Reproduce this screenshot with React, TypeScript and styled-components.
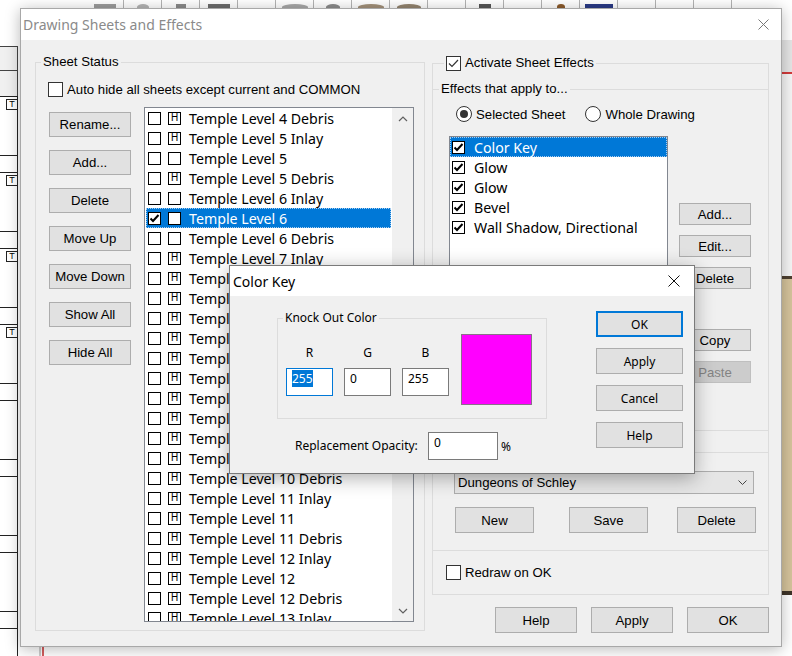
import React from "react";
import styled, { createGlobalStyle, css } from "styled-components";

const UI = `"Liberation Sans", Arial, sans-serif`;
const SEGOE = `"Noto Sans", "Open Sans", sans-serif`;

const GlobalStyle = createGlobalStyle`
  * { box-sizing: border-box; }
  html, body { margin: 0; padding: 0; background: #ffffff; }
  body { font-family: ${UI}; font-size: 13.2px; color: #000; }
`;

/* ---------- background application ---------- */
const Screen = styled.div`
  position: relative;
  width: 792px;
  height: 656px;
  overflow: hidden;
  background: #ffffff;
  display: flex;
  flex-direction: column;
`;

const Toolbar = styled.div`
  height: 8px;
  flex: none;
  display: flex;
  padding-left: 86px;
  overflow: hidden;
`;

const ToolCell = styled.div`
  width: 38px;
  height: 8px;
  flex: none;
  border-right: 1px solid #b4b4b4;
  display: flex;
  justify-content: center;
  align-items: flex-end;
  overflow: hidden;
`;

const ToolBlob = styled.span<{ $c: string; $w: number; $round?: boolean }>`
  width: ${(p) => p.$w}px;
  height: 6px;
  margin-bottom: -2px;
  background: ${(p) => p.$c};
  border-radius: ${(p) => (p.$round ? "50% 50% 0 0" : "0")};
`;

const Workspace = styled.div`
  flex: 1;
  display: flex;
  min-height: 0;
`;

const SheetStrip = styled.div`
  width: 18px;
  flex: none;
  display: flex;
  flex-direction: column;
  padding-top: 38px;
`;

const StripCell = styled.div<{ $h: number }>`
  height: ${(p) => p.$h}px;
  flex: none;
  background: #f0f0f0;
  border-top: 1px solid #444;
  border-right: 1px solid #444;
`;

const Thumb = styled.div`
  height: 76px;
  flex: none;
  display: flex;
  flex-direction: column;
  border-top: 1px solid #222;
  border-right: 1px solid #222;
  background: #fff;
`;

const ThumbArea = styled.div`
  height: 59px;
  flex: none;
  display: flex;
  justify-content: flex-end;
  align-items: flex-start;
  border-bottom: 1px solid #222;
`;

const TBadge = styled.span`
  width: 11px;
  height: 11px;
  margin-top: 2px;
  border: 1px solid #222;
  border-right: none;
  font: 9px ${UI};
  line-height: 9px;
  text-align: center;
`;

const Canvas = styled.div`
  flex: 1;
  min-width: 0;
  display: flex;
`;

const CanvasDrawing = styled.svg`
  display: block;
  width: 100%;
  height: 100%;
`;

const SidePanel = styled.div`
  width: 10px;
  flex: none;
  display: flex;
  flex-direction: column;
  padding-top: 32px;
`;

const SideBand = styled.div<{ $h: number; $c: string }>`
  height: ${(p) => p.$h}px;
  flex: none;
  background: ${(p) => p.$c};
`;

/* ---------- windows ---------- */
const MainWindow = styled.div`
  position: absolute;
  left: 20px;
  top: 8px;
  width: 762px;
  height: 639px;
  border: 1px solid #a8a8a8;
  background: #f0f0f0;
  box-shadow: 0 2px 14px rgba(0, 0, 0, 0.28);
  display: flex;
  flex-direction: column;
`;

const DialogWindow = styled.div`
  position: absolute;
  left: 229px;
  top: 265px;
  width: 466px;
  height: 209px;
  border: 1px solid #7a7a7a;
  background: #f0f0f0;
  box-shadow: 0 4px 18px rgba(0, 0, 0, 0.32);
  display: flex;
  flex-direction: column;
`;

const TitleBar = styled.div<{ $h: number; $pl: number; $pr: number }>`
  height: ${(p) => p.$h}px;
  flex: none;
  background: #ffffff;
  display: flex;
  align-items: center;
  justify-content: space-between;
  padding: 0 ${(p) => p.$pr}px 0 ${(p) => p.$pl}px;
`;

const TitleText = styled.span<{ $inactive?: boolean }>`
  font-family: ${SEGOE};
  font-size: 14px;
  color: ${(p) => (p.$inactive ? "#8a8a8a" : "#000")};
  white-space: nowrap;
`;

const CloseIcon = ({ size, color }: { size: number; color: string }) => (
  <svg width={size} height={size} viewBox={`0 0 ${size} ${size}`}>
    <path d={`M0.5 0.5 L${size - 0.5} ${size - 0.5} M${size - 0.5} 0.5 L0.5 ${size - 0.5}`} stroke={color} strokeWidth="1" fill="none" />
  </svg>
);

/* ---------- main dialog body ---------- */
const MainBody = styled.div`
  flex: 1;
  display: grid;
  grid-template-columns: 390px 337px;
  column-gap: 7px;
  padding: 0 12px 0 14px;
  align-items: start;
`;

const GroupBox = styled.div<{ $mt: number; $h: number; $w?: number }>`
  margin-top: ${(p) => p.$mt}px;
  height: ${(p) => p.$h}px;
  ${(p) => (p.$w ? `width: ${p.$w}px;` : "")}
  flex: none;
  border: 1px solid #dcdcdc;
  display: flex;
  flex-direction: column;
`;

const GroupLabel = styled.div<{ $ml: number; $segoe?: boolean }>`
  align-self: flex-start;
  margin: -9px 0 0 ${(p) => p.$ml}px;
  padding: 0 2px;
  height: 16px;
  line-height: 16px;
  background: #f0f0f0;
  display: flex;
  align-items: center;
  gap: 4px;
  white-space: nowrap;
  font-family: ${(p) => (p.$segoe ? SEGOE : UI)};
  font-size: ${(p) => (p.$segoe ? "12px" : "13.2px")};
`;

const Section = styled.div<{ $mt: number; $h: number }>`
  margin-top: ${(p) => p.$mt}px;
  height: ${(p) => p.$h}px;
  flex: none;
  border-top: 1px solid #dcdcdc;
  border-bottom: 1px solid #dcdcdc;
  display: flex;
  flex-direction: column;
`;

const CheckRow = styled.div<{ $mt: number; $ml: number }>`
  margin: ${(p) => p.$mt}px 0 0 ${(p) => p.$ml}px;
  height: 15px;
  display: flex;
  align-items: center;
  gap: 4px;
  white-space: nowrap;
`;

const WinCheck = styled.span`
  width: 15px;
  height: 15px;
  flex: none;
  border: 1px solid #333;
  background: #fff;
  display: inline-flex;
  align-items: center;
  justify-content: center;
`;

const CheckBox = ({ checked }: { checked?: boolean }) => (
  <WinCheck>
    {checked && (
      <svg width="13" height="13" viewBox="0 0 13 13">
        <path d="M2 6.5 L5 9.5 L11 3" stroke="#333" strokeWidth="1.2" fill="none" />
      </svg>
    )}
  </WinCheck>
);

const RadioRow = styled.div`
  margin: 9px 0 0 23px;
  height: 16px;
  display: flex;
  align-items: center;
  gap: 20px;
`;

const RadioItem = styled.label`
  display: flex;
  align-items: center;
  gap: 4px;
  white-space: nowrap;
`;

const RadioCircle = styled.span<{ $on?: boolean }>`
  width: 16px;
  height: 16px;
  flex: none;
  border: 1px solid #333;
  border-radius: 50%;
  background: #fff;
  display: inline-flex;
  align-items: center;
  justify-content: center;
  &::after {
    content: "";
    width: 8px;
    height: 8px;
    border-radius: 50%;
    background: ${(p) => (p.$on ? "#333" : "transparent")};
  }
`;

const ContentRow = styled.div<{ $mt: number; $pl: number }>`
  margin-top: ${(p) => p.$mt}px;
  padding-left: ${(p) => p.$pl}px;
  display: flex;
  align-items: flex-start;
`;

const ButtonCol = styled.div<{ $pt: number; $gap: number; $ml?: number; $w: number }>`
  width: ${(p) => p.$w}px;
  flex: none;
  margin-left: ${(p) => p.$ml ?? 0}px;
  padding-top: ${(p) => p.$pt}px;
  display: flex;
  flex-direction: column;
  gap: ${(p) => p.$gap}px;
`;

const Btn = styled.button<{ $w: number; $h: number; $mt?: number; $ml?: number; $default?: boolean; $segoe?: boolean }>`
  width: ${(p) => p.$w}px;
  height: ${(p) => p.$h}px;
  margin: ${(p) => p.$mt ?? 0}px 0 0 ${(p) => p.$ml ?? 0}px;
  flex: none;
  padding: 0;
  background: #e1e1e1;
  border: 1px solid #adadad;
  border-radius: 0;
  color: #000;
  font-family: ${(p) => (p.$segoe ? SEGOE : UI)};
  font-size: ${(p) => (p.$segoe ? "12px" : "13.2px")};
  font-weight: 400;
  display: flex;
  align-items: center;
  justify-content: center;
  white-space: nowrap;
  ${(p) =>
    p.$default &&
    css`
      border: 2px solid #0078d7;
    `}
  &:disabled {
    background: #cccccc;
    border-color: #bfbfbf;
    color: #838383;
  }
`;

const ListBox = styled.div<{ $w: number; $h: number; $ml?: number }>`
  width: ${(p) => p.$w}px;
  height: ${(p) => p.$h}px;
  margin-left: ${(p) => p.$ml ?? 0}px;
  flex: none;
  border: 1px solid #828790;
  background: #fff;
  display: flex;
  overflow: hidden;
`;

const ListRows = styled.div<{ $px: number }>`
  flex: 1;
  min-width: 0;
  padding: 0 ${(p) => p.$px}px;
  display: flex;
  flex-direction: column;
  overflow: hidden;
`;

const ListRow = styled.div<{ $selected?: boolean }>`
  height: 20px;
  flex: none;
  display: flex;
  align-items: center;
  padding-left: 2px;
  font-family: ${SEGOE};
  font-size: 14.2px;
  white-space: nowrap;
  color: ${(p) => (p.$selected ? "#fff" : "#000")};
  background: ${(p) => (p.$selected ? "#0078d7" : "transparent")};
  outline: ${(p) => (p.$selected ? "1px dotted #a7cdf0" : "none")};
  outline-offset: -1px;
`;

const MiniBox = styled.span<{ $ml?: number }>`
  width: 13px;
  height: 13px;
  flex: none;
  margin-left: ${(p) => p.$ml ?? 0}px;
  border: 1px solid #000;
  background: #fff;
  color: #000;
  display: inline-flex;
  align-items: center;
  justify-content: center;
  font: 10px ${UI};
  line-height: 10px;
`;

const RowText = styled.span<{ $ml: number }>`
  margin-left: ${(p) => p.$ml}px;
`;

const MiniCheck = () => (
  <svg width="11" height="11" viewBox="0 0 11 11">
    <path d="M1.5 5.5 L4 8 L9.5 2" stroke="#000" strokeWidth="2" fill="none" />
  </svg>
);

const ScrollBar = styled.div`
  width: 21px;
  flex: none;
  background: #f0f0f0;
  display: flex;
  flex-direction: column;
`;

const ScrollBtn = styled.div`
  height: 21px;
  flex: none;
  display: flex;
  align-items: center;
  justify-content: center;
`;

const ScrollTrack = styled.div`
  flex: 1;
  padding: 0 2px;
  display: flex;
  flex-direction: column;
`;

const ScrollThumb = styled.div<{ $mt: number; $h: number }>`
  margin-top: ${(p) => p.$mt}px;
  height: ${(p) => p.$h}px;
  background: #cdcdcd;
`;

const Chevron = ({ up }: { up?: boolean }) => (
  <svg width="10" height="6" viewBox="0 0 10 6">
    <path d={up ? "M1 5 L5 1 L9 5" : "M1 1 L5 5 L9 1"} stroke="#606060" strokeWidth="1.2" fill="none" />
  </svg>
);

const Combo = styled.div`
  margin: 18px 14px 0 21px;
  height: 23px;
  flex: none;
  border: 1px solid #adadad;
  background: #e5e5e5;
  display: flex;
  align-items: center;
  justify-content: space-between;
  padding: 0 6px 0 3px;
  white-space: nowrap;
`;

const FlexRow = styled.div<{ $mt: number; $pl: number; $gap?: number }>`
  margin-top: ${(p) => p.$mt}px;
  padding-left: ${(p) => p.$pl}px;
  display: flex;
  align-items: center;
  gap: ${(p) => p.$gap ?? 0}px;
`;

const BottomBar = styled.div`
  margin-top: 12px;
  display: flex;
  justify-content: flex-end;
  gap: 14px;
`;

const RightColumn = styled.div`
  display: flex;
  flex-direction: column;
`;

/* ---------- Color Key dialog ---------- */
const DialogBody = styled.div`
  flex: 1;
  display: flex;
  align-items: flex-start;
`;

const DialogLeft = styled.div`
  padding: 22px 0 0 47px;
  display: flex;
  flex-direction: column;
`;

const ChannelRow = styled.div`
  padding-left: 8px;
  display: flex;
  align-items: flex-start;
  gap: 11px;
`;

const ChannelCol = styled.div`
  width: 47px;
  padding-top: 19px;
  display: flex;
  flex-direction: column;
  align-items: center;
  gap: 7px;
`;

const SegoeLabel = styled.span<{ $w?: number }>`
  font-family: ${SEGOE};
  font-size: 12px;
  line-height: 16px;
  white-space: nowrap;
  ${(p) => (p.$w ? `width: ${p.$w}px; flex: none;` : "")}
`;

const TextField = styled.div<{ $w: number; $focused?: boolean }>`
  width: ${(p) => p.$w}px;
  height: 28px;
  flex: none;
  border: 1px solid ${(p) => (p.$focused ? "#0078d7" : "#7a7a7a")};
  background: #fff;
  padding: 2px 5px 0;
  font-family: ${SEGOE};
  font-size: 12px;
  line-height: 16px;
`;

const Selection = styled.span`
  background: #0078d7;
  color: #fff;
`;

const Swatch = styled.div<{ $color: string }>`
  width: 71px;
  height: 71px;
  flex: none;
  margin: 8px 0 0 1px;
  border: 1px solid #8a6f8a;
  background: ${(p) => p.$color};
`;

const OpacityRow = styled.div`
  margin-top: 13px;
  padding-left: 18px;
  height: 28px;
  display: flex;
  align-items: center;
`;

const Percent = styled.span`
  margin-left: 3px;
  font-family: ${SEGOE};
  font-size: 12px;
`;

/* ---------- data ---------- */
const sheets: [string, boolean, boolean][] = [
  ["Temple Level 4 Debris", false, true],
  ["Temple Level 5 Inlay", false, true],
  ["Temple Level 5", false, false],
  ["Temple Level 5 Debris", false, true],
  ["Temple Level 6 Inlay", false, false],
  ["Temple Level 6", true, false],
  ["Temple Level 6 Debris", false, false],
  ["Temple Level 7 Inlay", false, true],
  ["Temple Level 7", false, true],
  ["Temple Level 7 Debris", false, true],
  ["Temple Level 8 Inlay", false, true],
  ["Temple Level 8", false, true],
  ["Temple Level 8 Debris", false, true],
  ["Temple Level 9 Inlay", false, true],
  ["Temple Level 9", false, true],
  ["Temple Level 9 Debris", false, true],
  ["Temple Level 10 Inlay", false, true],
  ["Temple Level 10", false, true],
  ["Temple Level 10 Debris", false, true],
  ["Temple Level 11 Inlay", false, true],
  ["Temple Level 11", false, true],
  ["Temple Level 11 Debris", false, true],
  ["Temple Level 12 Inlay", false, true],
  ["Temple Level 12", false, true],
  ["Temple Level 12 Debris", false, true],
  ["Temple Level 13 Inlay", false, true],
];

const effects = ["Color Key", "Glow", "Glow", "Bevel", "Wall Shadow, Directional"];

const sheetButtons = ["Rename...", "Add...", "Delete", "Move Up", "Move Down", "Show All", "Hide All"];

const toolIcons: { c: string; w: number; round?: boolean }[] = [
  { c: "#9c9c9c", w: 22 },
  { c: "#b5b5b5", w: 12, round: true },
  { c: "#8a8a8a", w: 10 },
  { c: "#6d6d6d", w: 22 },
  { c: "#fff", w: 1 },
  { c: "#a9a9a9", w: 26, round: true },
  { c: "#8c8c8c", w: 14, round: true },
  { c: "#a3917a", w: 26, round: true },
  { c: "#93846f", w: 24, round: true },
  { c: "#fff", w: 1 },
  { c: "#555", w: 12 },
  { c: "#fff", w: 1 },
  { c: "#8b5a2b", w: 8, round: true },
  { c: "#2a3a85", w: 28 },
  { c: "#fff", w: 1 },
  { c: "#fff", w: 1 },
  { c: "#fff", w: 1 },
];

export default function App() {
  return (
    <>
      <GlobalStyle />
      <Screen>
        <Toolbar>
          {toolIcons.map((t, i) => (
            <ToolCell key={i}>
              <ToolBlob $c={t.c} $w={t.w} $round={t.round} />
            </ToolCell>
          ))}
        </Toolbar>
        <Workspace>
          <SheetStrip>
            <StripCell $h={24} />
            <StripCell $h={26} />
            {[0, 1, 2, 3, 4, 5, 6, 7].map((i) => (
              <Thumb key={i}>
                <ThumbArea>{i < 4 && <TBadge>T</TBadge>}</ThumbArea>
              </Thumb>
            ))}
          </SheetStrip>
          <Canvas>
            <CanvasDrawing viewBox="0 0 764 648" preserveAspectRatio="none">
              <line x1="25" y1="0" x2="25" y2="648" stroke="#c62828" strokeWidth="1.5" />
              <line x1="22" y1="0" x2="22" y2="648" stroke="#9a9a9a" strokeWidth="1" />
            </CanvasDrawing>
          </Canvas>
          <SidePanel>
            <SideBand $h={32} $c="#e6e6e6" />
            <SideBand $h={2} $c="#d23a3a" />
            <SideBand $h={202} $c="#f6f6f6" />
            <SideBand $h={3} $c="#4e4030" />
            <SideBand $h={312} $c="#d6c49c" />
            <SideBand $h={4} $c="#3e3428" />
          </SidePanel>
        </Workspace>

        <MainWindow>
          <TitleBar $h={31} $pl={2} $pr={12}>
            <TitleText $inactive>Drawing Sheets and Effects</TitleText>
            <CloseIcon size={11} color="#777" />
          </TitleBar>
          <MainBody>
            <GroupBox $mt={22} $h={569}>
              <GroupLabel $ml={5}>Sheet Status</GroupLabel>
              <CheckRow $mt={12} $ml={12}>
                <CheckBox />
                <span>Auto hide all sheets except current and COMMON</span>
              </CheckRow>
              <ContentRow $mt={10} $pl={13}>
                <ButtonCol $w={82} $pt={5} $gap={13}>
                  {sheetButtons.map((b) => (
                    <Btn key={b} $w={82} $h={25}>
                      {b}
                    </Btn>
                  ))}
                </ButtonCol>
                <ListBox $w={270} $h={515} $ml={13}>
                  <ListRows $px={1}>
                    {sheets.map(([name, checked, hidden]) => (
                      <ListRow key={name} $selected={name === "Temple Level 6"}>
                        <MiniBox>{checked && <MiniCheck />}</MiniBox>
                        <MiniBox $ml={7}>{hidden ? "H" : ""}</MiniBox>
                        <RowText $ml={8}>{name}</RowText>
                      </ListRow>
                    ))}
                  </ListRows>
                  <ScrollBar>
                    <ScrollBtn>
                      <Chevron up />
                    </ScrollBtn>
                    <ScrollTrack>
                      <ScrollThumb $mt={160} $h={120} />
                    </ScrollTrack>
                    <ScrollBtn>
                      <Chevron />
                    </ScrollBtn>
                  </ScrollBar>
                </ListBox>
              </ContentRow>
            </GroupBox>

            <RightColumn>
              <GroupBox $mt={23} $h={532}>
                <GroupLabel $ml={11}>
                  <CheckBox checked />
                  <span>Activate Sheet Effects</span>
                </GroupLabel>
                <Section $mt={18} $h={342}>
                  <GroupLabel $ml={6}>Effects that apply to...</GroupLabel>
                  <RadioRow>
                    <RadioItem>
                      <RadioCircle $on />
                      <span>Selected Sheet</span>
                    </RadioItem>
                    <RadioItem>
                      <RadioCircle />
                      <span>Whole Drawing</span>
                    </RadioItem>
                  </RadioRow>
                  <ContentRow $mt={14} $pl={16}>
                    <ListBox $w={219} $h={270}>
                      <ListRows $px={0}>
                        {effects.map((e, i) => (
                          <ListRow key={i} $selected={i === 0}>
                            <MiniBox>
                              <MiniCheck />
                            </MiniBox>
                            <RowText $ml={9}>{e}</RowText>
                          </ListRow>
                        ))}
                      </ListRows>
                    </ListBox>
                    <ButtonCol $w={72} $pt={67} $gap={10} $ml={11}>
                      <Btn $w={72} $h={22}>Add...</Btn>
                      <Btn $w={72} $h={22}>Edit...</Btn>
                      <Btn $w={72} $h={22}>Delete</Btn>
                      <Btn $w={72} $h={22} $mt={30}>Copy</Btn>
                      <Btn $w={72} $h={22} disabled>Paste</Btn>
                    </ButtonCol>
                  </ContentRow>
                </Section>
                <Section $mt={21} $h={99}>
                  <Combo>
                    <span>Dungeons of Schley</span>
                    <svg width="9" height="5" viewBox="0 0 9 5">
                      <path d="M0.5 0.5 L4.5 4.5 L8.5 0.5" stroke="#444" strokeWidth="1" fill="none" />
                    </svg>
                  </Combo>
                  <FlexRow $mt={13} $pl={22}>
                    <Btn $w={79} $h={26}>New</Btn>
                    <Btn $w={79} $h={26} $ml={35}>Save</Btn>
                    <Btn $w={79} $h={26} $ml={29}>Delete</Btn>
                  </FlexRow>
                </Section>
                <CheckRow $mt={14} $ml={13}>
                  <CheckBox />
                  <span>Redraw on OK</span>
                </CheckRow>
              </GroupBox>
              <BottomBar>
                <Btn $w={82} $h={26}>Help</Btn>
                <Btn $w={82} $h={26}>Apply</Btn>
                <Btn $w={82} $h={26}>OK</Btn>
              </BottomBar>
            </RightColumn>
          </MainBody>
        </MainWindow>

        <DialogWindow>
          <TitleBar $h={30} $pl={3} $pr={14}>
            <TitleText>Color Key</TitleText>
            <CloseIcon size={12} color="#111" />
          </TitleBar>
          <DialogBody>
            <DialogLeft>
              <GroupBox $mt={0} $h={101} $w={270}>
                <GroupLabel $ml={5} $segoe>
                  Knock Out Color
                </GroupLabel>
                <ChannelRow>
                  <ChannelCol>
                    <SegoeLabel>R</SegoeLabel>
                    <TextField $w={47} $focused>
                      <Selection>255</Selection>
                    </TextField>
                  </ChannelCol>
                  <ChannelCol>
                    <SegoeLabel>G</SegoeLabel>
                    <TextField $w={47}>0</TextField>
                  </ChannelCol>
                  <ChannelCol>
                    <SegoeLabel>B</SegoeLabel>
                    <TextField $w={47}>255</TextField>
                  </ChannelCol>
                  <Swatch $color="#ff00ff" />
                </ChannelRow>
              </GroupBox>
              <OpacityRow>
                <SegoeLabel $w={133}>Replacement Opacity:</SegoeLabel>
                <TextField $w={70}>0</TextField>
                <Percent>%</Percent>
              </OpacityRow>
            </DialogLeft>
            <ButtonCol $w={87} $pt={15} $gap={11} $ml={49}>
              <Btn $w={87} $h={26} $segoe $default>OK</Btn>
              <Btn $w={87} $h={26} $segoe>Apply</Btn>
              <Btn $w={87} $h={26} $segoe>Cancel</Btn>
              <Btn $w={87} $h={26} $segoe>Help</Btn>
            </ButtonCol>
          </DialogBody>
        </DialogWindow>
      </Screen>
    </>
  );
}
